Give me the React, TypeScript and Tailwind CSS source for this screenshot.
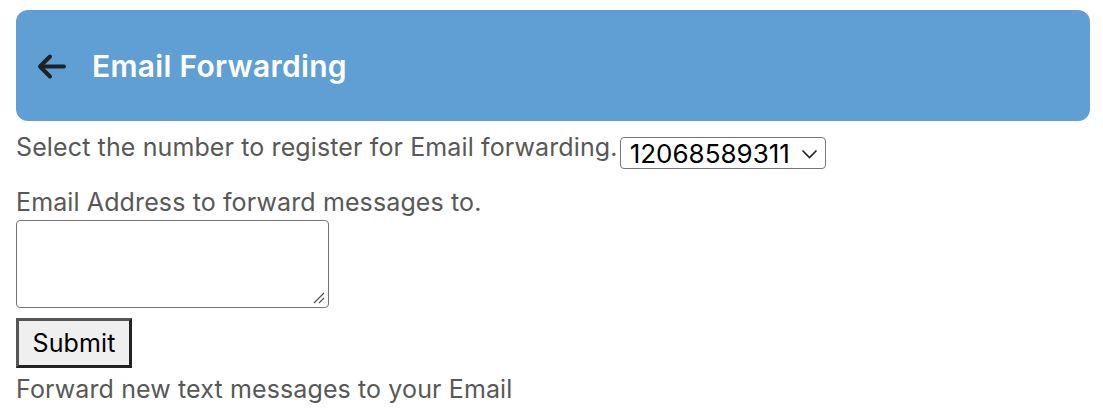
import React from "react";

export default function App() {
  return (
    <div className="bg-white w-[1103px] h-[413px] overflow-hidden pt-[10px]" style={{ fontFamily: "Inter, 'Noto Sans', sans-serif" }}>
      <div className="ml-4 mr-[13px] h-[111px] rounded-[12px] bg-[#5f9fd4] flex items-center">
        <svg className="ml-[21px] mt-[1px]" width="30" height="27" viewBox="0 0 30 27" fill="none" stroke="#1e2227" strokeWidth="4" strokeLinecap="round" strokeLinejoin="round">
          <path d="M27 13.5H4" />
          <path d="M13 3.5L3 13.5L13 23.5" />
        </svg>
        <h1 className="ml-[25px] text-white font-semibold text-[30px] leading-none tracking-[0.3px]">Email Forwarding</h1>
      </div>
      <div className="px-4 text-[#585858] text-[25px] tracking-[0.12px]">
        <div className="flex items-start">
          <span className="leading-[30px] mt-[11px]">Select the number to register for Email forwarding.</span>
          <div className="ml-[2px] mt-[16px] h-[32px] w-[206px] border border-[#767676] rounded-[4px] flex items-center pl-[9px] pr-[7px] text-black text-[26px] tracking-normal">
            <span className="flex-1 leading-none mt-[2px]">12068589311</span>
            <svg width="17" height="11" viewBox="0 0 17 11" fill="none" stroke="#222" strokeWidth="1.6"><path d="M1.5 2.5l7 7 7-7" /></svg>
          </div>
        </div>
        <div className="mt-[18px] leading-[30px]">Email Address to forward messages to.</div>
        <div className="mt-[3px] relative w-[313px] h-[88px] border border-[#767676] rounded-[4px]">
          <svg className="absolute right-[2px] bottom-[2px]" width="14" height="14" viewBox="0 0 14 14" stroke="#555" strokeWidth="1.3">
            <path d="M2 12L12 2" />
            <path d="M7 12L12 7" />
          </svg>
        </div>
        <button className="block mt-[10px] w-[116px] h-[50px] bg-[#efefef] text-black text-[25px] leading-none border-[3px] border-t-[#555] border-l-[#555] border-b-[#222] border-r-[#222]">Submit</button>
        <div className="mt-[6px] leading-[30px]">Forward new text messages to your Email</div>
      </div>
    </div>
  );
}
